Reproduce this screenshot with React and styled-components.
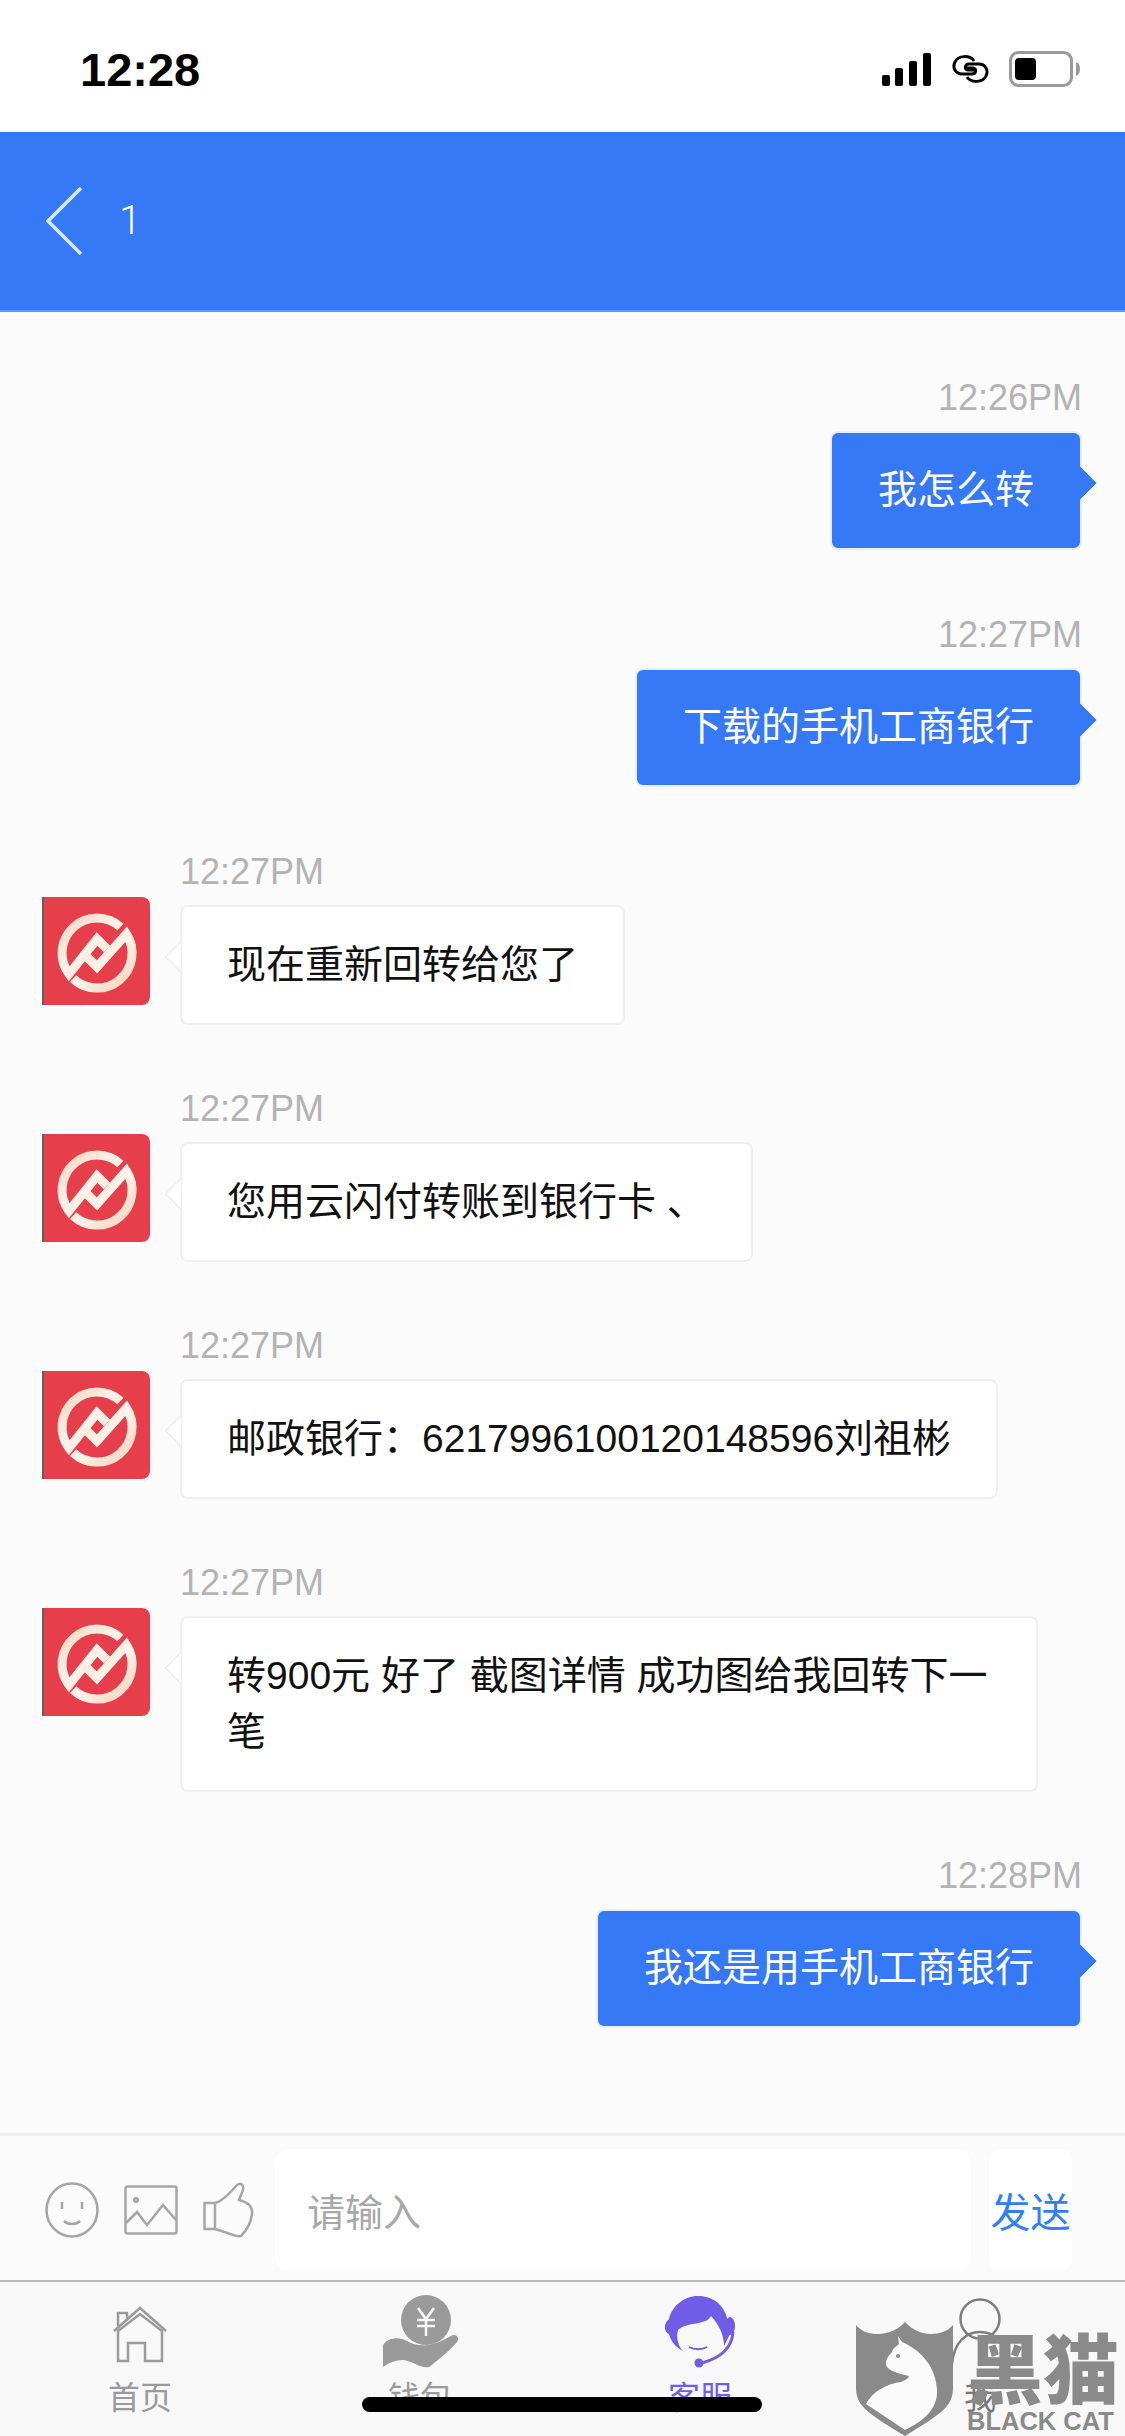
import React from "react";
import styled, { createGlobalStyle } from "styled-components";

const Global = createGlobalStyle`
  html, body { margin: 0; padding: 0; background: #fbfbfb; }
  * { box-sizing: border-box; }
  body { font-family: "Liberation Sans", "Noto Sans CJK SC", sans-serif; }
`;

const Page = styled.div`
  position: relative;
  width: 1125px;
  height: 2436px;
  display: flex;
  flex-direction: column;
  overflow: hidden;
  background: #fbfbfb;
`;

const StatusBar = styled.div`
  height: 132px;
  flex: none;
  background: #fff;
  display: flex;
  align-items: center;
  justify-content: space-between;
  padding: 6px 44px 0 80px;
`;
const Clock = styled.div`
  font-size: 47px;
  font-weight: 700;
  color: #000;
  line-height: 1;
`;
const StatusIcons = styled.div`
  display: flex;
  align-items: center;
  gap: 20px;
`;

const Header = styled.header`
  height: 180px;
  flex: none;
  background: #3679f6;
  border-bottom: 2px solid #5f95f8;
  display: flex;
  align-items: center;
  padding: 0 0 0 46px;
  gap: 36px;
`;
const HeaderTitle = styled.div`
  font-family: Roboto, sans-serif;
  font-size: 40px;
  color: #fff;
  line-height: 1;
  font-weight: 300;
`;

const List = styled.main`
  flex: 1;
  min-height: 0;
  display: flex;
  flex-direction: column;
  gap: 64px;
  padding: 66px 43px 0 42px;
`;

const Row = styled.div`
  display: flex;
  justify-content: ${(p) => (p.$me ? "flex-end" : "flex-start")};
  align-items: flex-start;
  margin-bottom: ${(p) => (p.$me ? "1px" : "0")};
`;
const Column = styled.div`
  display: flex;
  flex-direction: column;
  align-items: ${(p) => (p.$me ? "flex-end" : "flex-start")};
  gap: 13px;
`;
const Time = styled.div`
  font-size: 36px;
  line-height: 40px;
  height: 40px;
  color: #b3b3b3;
`;
const Avatar = styled.div`
  width: 108px;
  height: 108px;
  flex: none;
  margin-top: 45px;
  margin-right: 30px;
  background: #e63e4a;
  border-left: 2px solid #6a5a5c;
  border-radius: 0 8px 8px 0;
  overflow: hidden;
`;
const Bubble = styled.div`
  position: relative;
  max-width: 858px;
  font-size: 39px;
  line-height: 56px;
  padding: ${(p) => (p.$me ? "29px 46px 30px" : "30px 45px 30px")};
  border-radius: 8px;
  background: ${(p) => (p.$me ? "#3679f6" : "#fff")};
  color: ${(p) => (p.$me ? "#fff" : "#111")};
  border: 2px solid ${(p) => (p.$me ? "#e9eefa" : "#efefef")};
  &::after {
    content: "";
    position: absolute;
    top: 38px;
    width: 24px;
    height: 24px;
    transform: rotate(45deg);
    background: ${(p) => (p.$me ? "#3679f6" : "#fff")};
    ${(p) =>
      p.$me
        ? "right: -12px; clip-path: polygon(0 0, 100% 0, 100% 100%);"
        : "left: -13px; clip-path: polygon(0 0, 0 100%, 100% 100%); box-shadow: inset 2px -2px 0 #efefef;"}
  }
`;

const InputBar = styled.div`
  flex: none;
  height: 149px;
  border-top: 3px solid #efefef;
  border-bottom: 2px solid #b9b9b9;
  background: #fbfbfb;
  display: flex;
  align-items: flex-start;
  padding: 13px 53px 0 45px;
`;
const Tools = styled.div`
  height: 121px;
  display: flex;
  align-items: center;
  gap: 25px;
  margin-right: 21px;
`;
const InputBox = styled.div`
  flex: 1;
  height: 121px;
  background: #fff;
  border-radius: 14px;
  display: flex;
  align-items: center;
  padding: 0 0 0 32px;
  font-size: 38px;
  color: #a8a8a8;
`;
const SendBox = styled.div`
  width: 83px;
  height: 121px;
  margin-left: 18px;
  background: #fff;
  border-radius: 10px;
  display: flex;
  align-items: center;
  justify-content: center;
  font-size: 40px;
  white-space: nowrap;
  color: #2f80f5;
`;

const TabBar = styled.nav`
  flex: none;
  height: 154px;
  background: #f8f8f8;
  display: grid;
  grid-template-columns: repeat(4, 1fr);
  padding-right: 5px;
`;
const Tab = styled.div`
  display: flex;
  flex-direction: column;
  align-items: center;
`;
const TabIcon = styled.div`
  height: 100px;
  display: flex;
  align-items: center;
  justify-content: center;
`;
const TabLabel = styled.div`
  font-size: 32px;
  line-height: 32px;
  color: ${(p) => (p.$active ? "#6f5de7" : p.$dark ? "#777" : "#9a9a9a")};
`;

const HomeBar = styled.div`
  position: absolute;
  left: 362px;
  top: 2397px;
  width: 400px;
  height: 15px;
  border-radius: 8px;
  background: #000;
`;

const Watermark = styled.div`
  position: absolute;
  left: 856px;
  top: 2322px;
  display: flex;
  gap: 14px;
  color: #8a8a8a;
`;
const WatermarkText = styled.div`
  display: flex;
  flex-direction: column;
  align-items: flex-start;
  margin-top: 0;
`;
const WatermarkCn = styled.div`
  font-family: "Noto Sans CJK SC", sans-serif;
  font-size: 76px;
  font-weight: 900;
  line-height: 86px;
  white-space: nowrap;
`;
const WatermarkEn = styled.div`
  font-family: "Liberation Sans", sans-serif;
  font-size: 25.5px;
  font-weight: 700;
  line-height: 26px;
  white-space: nowrap;
`;

const Logo = () => (
  <svg width="106" height="108" viewBox="0 0 106 108">
    <defs>
      <linearGradient id="g" x1="0" y1="0" x2="1" y2="1">
        <stop offset="0" stopColor="#f3d6c2" />
        <stop offset="0.5" stopColor="#fdf3ea" />
        <stop offset="1" stopColor="#f1d2bc" />
      </linearGradient>
    </defs>
    <g fill="none" stroke="url(#g)" strokeWidth="9">
      <path d="M76.4 30 A35 35 0 0 0 25 77 L53 42 L63 52" />
      <path d="M29.1 81.6 A35 35 0 0 0 82.4 37 L53 70 L43 60" />
    </g>
  </svg>
);

const Signal = () => (
  <svg width="50" height="34" viewBox="0 0 50 34" fill="#000">
    <rect x="0" y="23" width="8" height="11" rx="2" />
    <rect x="13" y="16" width="8" height="18" rx="2" />
    <rect x="27" y="9" width="8" height="25" rx="2" />
    <rect x="41" y="1" width="8" height="33" rx="2" />
  </svg>
);
const LinkIcon = () => (
  <svg width="37" height="30" viewBox="0 0 37 30" fill="none" stroke="#000" strokeWidth="3">
    <path d="M22 7 C18 1 6 1 3 8 C0 14 4 20 10 20 L20 20 C24 20 25 15 21 14 L13 14" />
    <path d="M15 23 C19 29 31 29 34 22 C37 16 33 10 27 10 L17 10 C13 10 12 15 16 16 L24 16" />
  </svg>
);
const Battery = () => (
  <svg width="72" height="36" viewBox="0 0 72 36">
    <rect x="1.5" y="1.5" width="61" height="33" rx="8" fill="none" stroke="#9a9a9a" strokeWidth="3" />
    <rect x="6" y="7" width="21" height="22" rx="4" fill="#000" />
    <path d="M67 11 C70 12 71 15 71 18 C71 21 70 24 67 25 Z" fill="#9a9a9a" />
  </svg>
);
const Chevron = () => (
  <svg width="37" height="68" viewBox="0 0 37 68" fill="none" stroke="#dbe7ff" strokeWidth="3.5">
    <path d="M35 1 L2 34 L35 67" />
  </svg>
);

const Smile = () => (
  <svg width="54" height="56" viewBox="0 0 54 56" fill="none" stroke="#a6a6a6" strokeWidth="2.5">
    <ellipse cx="27" cy="28" rx="25.5" ry="26.5" />
    <path d="M17 20 V27 M37 20 V27" />
    <path d="M19 39 C23 43 31 43 35 39" />
  </svg>
);
const ImageIcon = () => (
  <svg width="54" height="50" viewBox="0 0 54 50" fill="none" stroke="#a6a6a6" strokeWidth="2.5">
    <rect x="1.5" y="1.5" width="51" height="47" rx="2" />
    <circle cx="12" cy="15" r="3" fill="#a6a6a6" stroke="none" />
    <path d="M2 38 L13 27 L23 40 L39 20 L52 35" />
  </svg>
);
const Thumb = () => (
  <svg width="51" height="56" viewBox="0 0 51 56" fill="none" stroke="#a6a6a6" strokeWidth="2.5">
    <path d="M1.5 21 H12 V47 H1.5 Z" />
    <path d="M12 21 C20 19 28 10 34 3 C38 0 41 3 40 8 L36 18 C44 20 50 24 49 32 C48 40 44 48 38 54 C34 56 24 50 12 47" />
  </svg>
);

const House = () => (
  <svg width="54" height="62" viewBox="0 -6 54 62" fill="none" stroke="#9a9a9a" strokeWidth="2.5">
    <path d="M1 24 L27 1 L53 24" />
    <path d="M5 19 V6 H14 V11" />
    <path d="M5 24 L27 7 L49 24 V54 H32 V36 H15 V54 H5 Z" />
  </svg>
);
const Wallet = () => (
  <svg width="75" height="74" viewBox="0 0 75 74">
    <circle cx="43" cy="25" r="25" fill="#9a9a9a" />
    <path d="M35 13 L43 24 L51 13 M34 25 H52 M34 31 H52 M43 24 V41" fill="none" stroke="#f8f8f8" strokeWidth="2.5" />
    <path d="M0 50 C6 42 16 42 24 46 C38 54 52 50 68 41 C73 38 77 43 74 47 C64 58 54 66 46 72 C38 74 30 66 20 65 C12 65 6 68 0 72 Z" fill="#9a9a9a" />
  </svg>
);
const Agent = () => (
  <svg width="72" height="72" viewBox="0 0 72 72" fill="#6f5de7">
    <path d="M34 0 C50 0 60 10 63 22 L66 38 L60 50 C60 40 56 30 47 20 C42 30 24 25 14 34 C12 42 14 50 19 55 C9 50 6 42 5 38 C0 36 -1 28 5 23 C8 10 20 0 34 0 Z" />
    <ellipse cx="66" cy="30" rx="5" ry="9" />
    <path d="M69 36 C68 52 56 62 38 67" fill="none" stroke="#6f5de7" strokeWidth="3" />
    <circle cx="35" cy="67" r="4.5" />
    <path d="M25 51 C30 54 38 54 43 51" fill="none" stroke="#6f5de7" strokeWidth="2" />
  </svg>
);
const Person = () => (
  <svg width="60" height="68" viewBox="0 0 60 68" fill="none" stroke="#7d7d7d" strokeWidth="2.5">
    <circle cx="30" cy="21" r="19.5" />
    <path d="M2 66 C4 44 16 34 30 34 C44 34 56 44 58 66" />
  </svg>
);
const Shield = () => (
  <svg width="97" height="114" viewBox="0 0 97 114">
    <path d="M0 3 C6 10 14 12 21 12 C32 12 42 8 49 0 C56 8 66 12 75 12 C84 12 92 9 97 3 V65 C97 84 88 90 49 114 C10 90 0 84 0 65 Z" fill="#8a8a8a" />
    <path d="M42 14 L46 20 C65 28 80 45 81 68 C82 85 70 98 49 108 L10 82 C16 70 30 62 45 60 C50 58 53 56 53 54 C45 52 36 50 32 46 C28 42 30 36 36 30 C37 26 41 24 43 22 Z" fill="#fbfbfb" />
    <circle cx="42" cy="34" r="2" fill="#8a8a8a" />
  </svg>
);

const messages = [
  { me: true, time: "12:26PM", text: "我怎么转" },
  { me: true, time: "12:27PM", text: "下载的手机工商银行" },
  { time: "12:27PM", text: "现在重新回转给您了" },
  { time: "12:27PM", text: "您用云闪付转账到银行卡 、" },
  { time: "12:27PM", text: "邮政银行：6217996100120148596刘祖彬" },
  { time: "12:27PM", text: "转900元 好了 截图详情 成功图给我回转下一笔" },
  { me: true, time: "12:28PM", text: "我还是用手机工商银行" },
];

export default function App() {
  return (
    <Page>
      <Global />
      <StatusBar>
        <Clock>12:28</Clock>
        <StatusIcons>
          <Signal />
          <LinkIcon />
          <Battery />
        </StatusIcons>
      </StatusBar>
      <Header>
        <Chevron />
        <HeaderTitle>1</HeaderTitle>
      </Header>
      <List>
        {messages.map((m, i) => (
          <Row key={i} $me={m.me}>
            {!m.me && (
              <Avatar>
                <Logo />
              </Avatar>
            )}
            <Column $me={m.me}>
              <Time>{m.time}</Time>
              <Bubble $me={m.me}>{m.text}</Bubble>
            </Column>
          </Row>
        ))}
      </List>
      <InputBar>
        <Tools>
          <Smile />
          <ImageIcon />
          <Thumb />
        </Tools>
        <InputBox>请输入</InputBox>
        <SendBox>发送</SendBox>
      </InputBar>
      <TabBar>
        <Tab>
          <TabIcon><House /></TabIcon>
          <TabLabel>首页</TabLabel>
        </Tab>
        <Tab>
          <TabIcon><Wallet /></TabIcon>
          <TabLabel>钱包</TabLabel>
        </Tab>
        <Tab>
          <TabIcon><Agent /></TabIcon>
          <TabLabel $active>客服</TabLabel>
        </Tab>
        <Tab>
          <TabIcon><Person /></TabIcon>
          <TabLabel $dark>我</TabLabel>
        </Tab>
      </TabBar>
      <Watermark>
        <Shield />
        <WatermarkText>
          <WatermarkCn>黑猫</WatermarkCn>
          <WatermarkEn>BLACK CAT</WatermarkEn>
        </WatermarkText>
      </Watermark>
      <HomeBar />
    </Page>
  );
}
